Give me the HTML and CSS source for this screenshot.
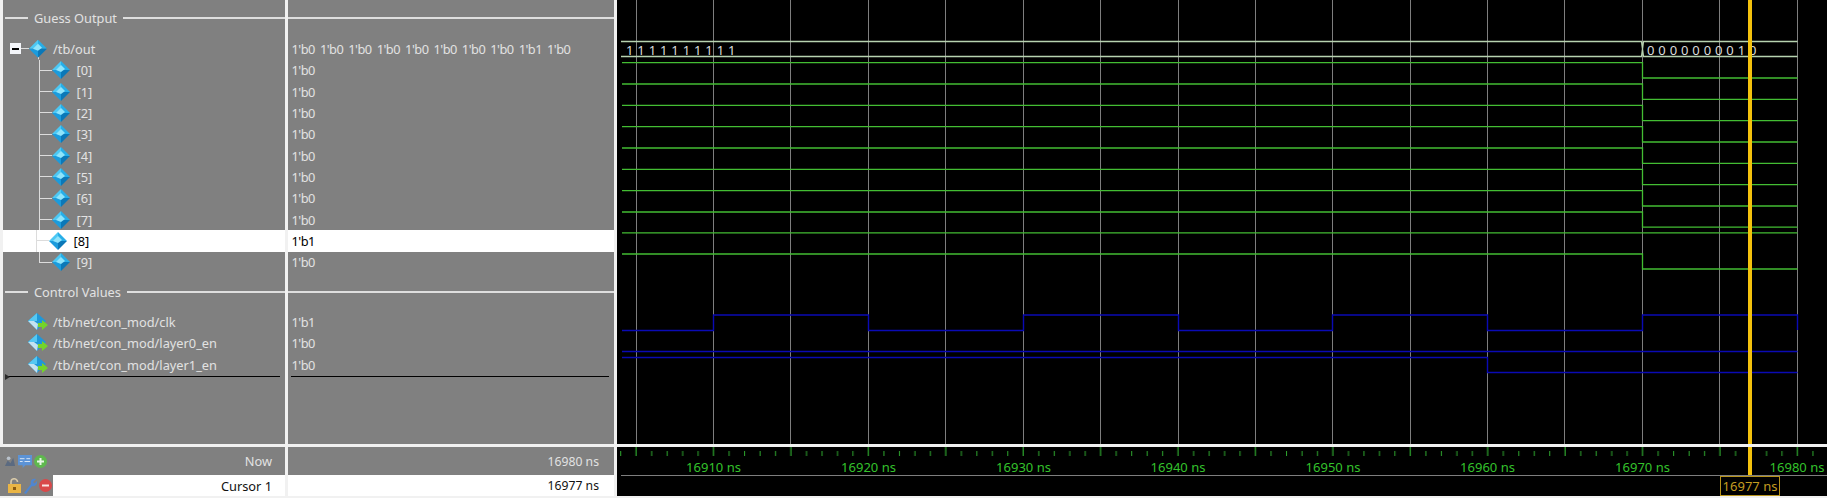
FILE: index.html
```html
<!DOCTYPE html>
<html>
<head>
  <meta charset="utf-8" />
  <title>Wave</title>
  <link rel="stylesheet" href="styles.css">
</head>
<body>
  <svg class="defs" width="0" height="0">
    <defs>
      <symbol id="diamond" viewBox="0 0 18 18">
        <polygon points="9,0 0,9 9,9" fill="#4cc8f4" />
        <polygon points="9,0 18,9 9,9" fill="#27aee8" />
        <polygon points="0,9 9,18 9,9" fill="#1b9bdc" />
        <polygon points="18,9 9,18 9,9" fill="#0b78b8" />
        <polygon points="9,4 4,9 9,11 13,8" fill="#8fe4fb" />
      </symbol>
      <symbol id="driver" viewBox="0 0 20 20">
        <polygon points="9,1 0,9 9,18 18,9" fill="#1f97d8" />
        <polygon points="9,1 0,9 9,9" fill="#55c8f2" />
        <polygon points="0,9 9,18 10,12 6,9" fill="#c4e2f0" />
        <polygon points="10,11 14,11 14,8 20,13 14,18 14,15 10,15" fill="#74d42a" />
      </symbol>
    </defs>
  </svg>

  <div class="window">
    <div class="pane names">
      <div class="divider-row"><span class="rule short"></span><span class="divider-label">Guess Output</span><span class="rule"></span></div>
      <div class="row open">
        <span class="toggle"><span class="minus"></span></span><span class="toggle-link"></span>
        <svg class="tree-head" viewBox="0 0 18 21.33"><line x1="9.5" y1="18" x2="9.5" y2="21.33" stroke="#dcdcdc" /><use href="#diamond" x="0" y="1.66" width="18" height="18" /></svg>
        <span class="sig-name">/tb/out</span>
      </div>
      <div class="row child"><span class="branch"></span><svg class="icon"><use href="#diamond" /></svg><span class="sig-name">[0]</span></div>
      <div class="row child"><span class="branch"></span><svg class="icon"><use href="#diamond" /></svg><span class="sig-name">[1]</span></div>
      <div class="row child"><span class="branch"></span><svg class="icon"><use href="#diamond" /></svg><span class="sig-name">[2]</span></div>
      <div class="row child"><span class="branch"></span><svg class="icon"><use href="#diamond" /></svg><span class="sig-name">[3]</span></div>
      <div class="row child"><span class="branch"></span><svg class="icon"><use href="#diamond" /></svg><span class="sig-name">[4]</span></div>
      <div class="row child"><span class="branch"></span><svg class="icon"><use href="#diamond" /></svg><span class="sig-name">[5]</span></div>
      <div class="row child"><span class="branch"></span><svg class="icon"><use href="#diamond" /></svg><span class="sig-name">[6]</span></div>
      <div class="row child"><span class="branch"></span><svg class="icon"><use href="#diamond" /></svg><span class="sig-name">[7]</span></div>
      <div class="row child selected"><span class="branch"></span><svg class="icon"><use href="#diamond" /></svg><span class="sig-name">[8]</span></div>
      <div class="row child"><span class="branch last"></span><svg class="icon"><use href="#diamond" /></svg><span class="sig-name">[9]</span></div>
      <div class="divider-row second"><span class="rule short"></span><span class="divider-label">Control Values</span><span class="rule"></span></div>
      <div class="row plain"><svg class="icon driver"><use href="#driver" /></svg><span class="sig-name">/tb/net/con_mod/clk</span></div>
      <div class="row plain"><svg class="icon driver"><use href="#driver" /></svg><span class="sig-name">/tb/net/con_mod/layer0_en</span></div>
      <div class="row plain"><svg class="icon driver"><use href="#driver" /></svg><span class="sig-name">/tb/net/con_mod/layer1_en</span></div>
      <div class="end-line"><span class="end-mark"></span></div>
    </div>

    <div class="pane values">
      <div class="divider-row"><span class="rule"></span></div>
      <div class="row"><span class="val-group">
        <span>1'b0</span><span>1'b0</span><span>1'b0</span><span>1'b0</span><span>1'b0</span><span>1'b0</span><span>1'b0</span><span>1'b0</span><span>1'b1</span><span>1'b0</span>
      </span></div>
      <div class="row">1'b0</div>
      <div class="row">1'b0</div>
      <div class="row">1'b0</div>
      <div class="row">1'b0</div>
      <div class="row">1'b0</div>
      <div class="row">1'b0</div>
      <div class="row">1'b0</div>
      <div class="row">1'b0</div>
      <div class="row selected">1'b1</div>
      <div class="row">1'b0</div>
      <div class="divider-row second"><span class="rule"></span></div>
      <div class="row">1'b1</div>
      <div class="row">1'b0</div>
      <div class="row">1'b0</div>
      <div class="end-line"></div>
    </div>

    <div class="wave">
      <svg class="wave-svg" viewBox="617 0 1210 444" width="1210" height="444">
        <path class="grid" d="M636.5 0V444M713.5 0V444M790.5 0V444M868.5 0V444M945.5 0V444M1023.5 0V444M1100.5 0V444M1178.5 0V444M1255.5 0V444M1332.5 0V444M1410.5 0V444M1487.5 0V444M1564.5 0V444M1642.5 0V444M1719.5 0V444M1797.5 0V444" />

        <path class="bus" d="M621 41.5H1641.5L1643.5 56.5H1797.5M621 56.5H1641.5L1643.5 41.5H1797.5" />
        <text class="bus-text" x="626" y="55">1111111111</text>
        <text class="bus-text" x="1647" y="55">0000000010</text>

        <path class="logic" d="M622 62.7H1642.5V78H1797.5" />
        <path class="logic" d="M622 84H1642.5V99.3H1797.5" />
        <path class="logic" d="M622 105.3H1642.5V120.7H1797.5" />
        <path class="logic" d="M622 126.7H1642.5V142H1797.5" />
        <path class="logic" d="M622 148H1642.5V163.3H1797.5" />
        <path class="logic" d="M622 169.3H1642.5V184.7H1797.5" />
        <path class="logic" d="M622 190.7H1642.5V206H1797.5" />
        <path class="logic" d="M622 212H1642.5V227.2H1797.5" />
        <path class="logic" d="M622 232.8H1797.5" />
        <path class="logic" d="M622 254H1642.5V269H1797.5" />

        <path class="ctrl" d="M622 330.5H713.5V315H868.5V330.5H1023.5V315H1178.5V330.5H1332.5V315H1487.5V330.5H1642.5V315H1797.5V330" />
        <path class="ctrl" d="M622 351.5H1797.5" />
        <path class="ctrl" d="M622 357.5H1487.5V372.5H1797.5" />

        <rect class="cursor" x="1748" y="0" width="4" height="444" />
      </svg>

      <svg class="ruler" viewBox="617 447 1210 49" width="1210" height="49">
        <defs>
          <pattern id="ticks" patternUnits="userSpaceOnUse" x="620" y="447" width="77.42" height="10">
            <rect x="0.2" y="4" width="1" height="5" />
            <rect x="15.5" y="0" width="1.2" height="9" />
            <rect x="31.2" y="4" width="1" height="5" />
            <rect x="46.7" y="4" width="1" height="5" />
            <rect x="62.2" y="4" width="1" height="5" />
          </pattern>
        </defs>
        <rect class="ticks" x="620" y="447" width="1194" height="10" fill="url(#ticks)" />
        <text class="time" x="713.5" y="472">16910 ns</text>
        <text class="time" x="868.5" y="472">16920 ns</text>
        <text class="time" x="1023.5" y="472">16930 ns</text>
        <text class="time" x="1178" y="472">16940 ns</text>
        <text class="time" x="1333" y="472">16950 ns</text>
        <text class="time" x="1487.5" y="472">16960 ns</text>
        <text class="time" x="1642.5" y="472">16970 ns</text>
        <text class="time" x="1797" y="472">16980 ns</text>
        <line class="ruler-base" x1="621" y1="475.5" x2="1827" y2="475.5" />
        <rect class="cursor" x="1748" y="447" width="4" height="28" />
        <rect class="cursor-box" x="1720.5" y="476.5" width="59" height="19" />
        <text class="cursor-time" x="1750" y="491">16977 ns</text>
      </svg>
    </div>

    <div class="foot foot-names">
      <div class="foot-row">
        <span class="tools">
          <svg width="12" height="12" viewBox="0 0 13 13"><path d="M1 12 4 6 7 9 10 3 12 12Z" fill="#5b6a80" /><circle cx="5" cy="3.5" r="2" fill="#b9c2cc" /></svg>
          <svg width="14" height="15" viewBox="0 0 15 16"><path d="M0 1H15V12H8L5 15V12H0Z" fill="#5c93d6" /><path d="M2 5H7M9 5H13M2 8H5M7 8H13" stroke="#dfe9f5" /></svg>
          <svg width="13" height="13" viewBox="0 0 13 13"><circle cx="6.5" cy="6.5" r="6.5" fill="#5fb84e" /><path d="M6.5 3V10M3 6.5H10" stroke="#e8f6e4" stroke-width="2" /></svg>
        </span>
        <span class="foot-label">Now</span>
      </div>
      <div class="foot-row cursor-row">
        <span class="tools tools-cursor">
          <svg width="13" height="15" viewBox="0 0 13 15"><path d="M3 7V4A3.2 3.2 0 0 1 9.5 4" fill="none" stroke="#d8c9a8" stroke-width="1.6" /><rect x="0" y="6" width="13" height="9" fill="#eab545" /><rect x="5" y="9" width="3" height="3" fill="#8a5a10" /></svg>
          <svg width="14" height="16" viewBox="0 0 14 16"><path d="M1 15 8 6C7 3 9 0 13 1L10 4 11.5 5.5 14 3C15 7 11 9 9 8L3 16Z" fill="#4f86d0" /></svg>
          <svg width="13" height="13" viewBox="0 0 13 13"><circle cx="6.5" cy="6.5" r="6.5" fill="#d9484a" /><path d="M3 6.5H10" stroke="#f8e4e4" stroke-width="2" /></svg>
        </span>
        <span class="cursor-field">Cursor 1</span>
      </div>
    </div>

    <div class="foot foot-values">
      <div class="foot-row">16980 ns</div>
      <div class="foot-row cursor-row">16977 ns</div>
    </div>
  </div>
</body>
</html>
```

FILE: styles.css
```css
html, body {
  margin: 0;
  padding: 0;
}

body {
  width: 1827px;
  height: 498px;
  overflow: hidden;
  background-color: #f1f1f1;
  font-family: "Noto Sans", Tahoma, sans-serif;
  font-size: 12.8px;
}

.defs {
  display: block;
  height: 0;
}

.window {
  display: grid;
  grid-template-columns: 285px 326px 1210px;
  grid-template-rows: 444px 49px;
  column-gap: 3px;
  row-gap: 3px;
}

.pane {
  background-color: #808080;
  color: #e2e2e2;
  padding-top: 7px;
  box-sizing: border-box;
  height: 444px;
  overflow: hidden;
}

.names {
  border-left: 3px solid #f1f1f1;
}

.row {
  display: flex;
  align-items: center;
  height: 21.33px;
  white-space: nowrap;
}

.divider-row {
  display: flex;
  align-items: center;
  height: 21.33px;
  margin-bottom: 10px;
}

.divider-row.second {
  margin-top: 8px;
  margin-bottom: 9px;
}

.divider-label {
  padding: 0 6px;
  white-space: nowrap;
}

.rule {
  flex: 1;
  height: 2px;
  background-color: #dedede;
}

.rule.short {
  flex: none;
  width: 23px;
  margin-left: 2px;
}

.row.selected {
  background-color: #fff;
  color: #000;
}

.names .row.selected {
  margin-left: -3px;
  padding-left: 38.5px;
}

.names .row.child {
  padding-left: 35.5px;
}

.names .row.open {
  padding-left: 7px;
}

.names .row.plain {
  padding-left: 25px;
}

.toggle {
  display: flex;
  align-items: center;
  justify-content: center;
  width: 11px;
  height: 11px;
  background-color: #f4f6fa;
  flex: none;
}

.minus {
  width: 7px;
  height: 2px;
  background-color: #000;
}

.toggle-link {
  width: 8px;
  height: 1px;
  background-color: #dcdcdc;
}

.tree-head {
  width: 18px;
  height: 21.33px;
  flex: none;
  margin-right: 6px;
}

.branch {
  align-self: stretch;
  width: 12px;
  flex: none;
  border-left: 1px solid #dcdcdc;
  background: linear-gradient(#dcdcdc, #dcdcdc) center / 100% 1px no-repeat;
}

.branch.last {
  align-self: flex-start;
  height: 50%;
  border-bottom: 1px solid #dcdcdc;
  background: none;
}

.icon {
  width: 18px;
  height: 18px;
  flex: none;
  margin-right: 7px;
}

.icon.driver {
  width: 20px;
  height: 20px;
  margin-right: 5px;
}

.values .row {
  padding-left: 3.5px;
  letter-spacing: -0.5px;
}

.val-group {
  display: flex;
  gap: 5px;
}

.end-line {
  display: flex;
  align-items: center;
  height: 1px;
  margin: 1px 5px 0 2px;
  background-color: #000;
}

.end-mark {
  width: 0;
  height: 0;
  border-left: 5px solid #2a2a2a;
  border-top: 3px solid transparent;
  border-bottom: 3px solid transparent;
}

.values .end-line {
  margin-left: 3px;
}

.wave {
  grid-column: 3;
  grid-row: 1 / span 2;
  background-color: #f1f1f1;
}

.wave-svg,
.ruler {
  display: block;
  background-color: #000;
}

.ruler {
  margin-top: 3px;
}

.grid {
  stroke: #7e7e7e;
  fill: none;
}

.bus {
  stroke: #b7d3b0;
  stroke-width: 1.3;
  fill: none;
}

.bus-text {
  fill: #dcdcdc;
  font-size: 13px;
  letter-spacing: 3.9px;
}

.logic {
  stroke: #43bd33;
  stroke-width: 1.3;
  fill: none;
}

.ctrl {
  stroke: #0a0ab4;
  stroke-width: 1.4;
  fill: none;
}

.cursor {
  fill: #f4c20d;
}

.ticks {
  stroke: none;
}

#ticks rect {
  fill: #2ea82e;
}

.time {
  fill: #34c22c;
  font-size: 13px;
  text-anchor: middle;
}

.ruler-base {
  stroke: #7e7e7e;
}

.cursor-box {
  fill: #000;
  stroke: #b8941c;
}

.cursor-time {
  fill: #c49c20;
  font-size: 13px;
  text-anchor: middle;
}

.foot {
  grid-row: 2;
  height: 49px;
  color: #e2e2e2;
}

.foot-names {
  grid-column: 1;
}

.foot-values {
  grid-column: 2;
  font-size: 12.2px;
}

.foot-row {
  display: flex;
  align-items: center;
  justify-content: flex-end;
  height: 28px;
  padding-right: 15px;
  background-color: #808080;
}

.foot-names .foot-row {
  padding-right: 12px;
}

.foot-row.cursor-row {
  height: 21px;
  background-color: #fff;
  color: #111;
}

.foot-names .foot-row.cursor-row {
  background-color: #808080;
  padding-right: 0;
}

.tools {
  display: flex;
  align-items: center;
  gap: 2px;
  margin-right: auto;
  padding-left: 4px;
}

.tools-cursor {
  padding-left: 8px;
}

.foot-label {
  padding-right: 1px;
}

.cursor-field {
  display: flex;
  align-items: center;
  justify-content: flex-end;
  box-sizing: border-box;
  width: 232px;
  height: 100%;
  padding-right: 13px;
  background-color: #fff;
}
```
